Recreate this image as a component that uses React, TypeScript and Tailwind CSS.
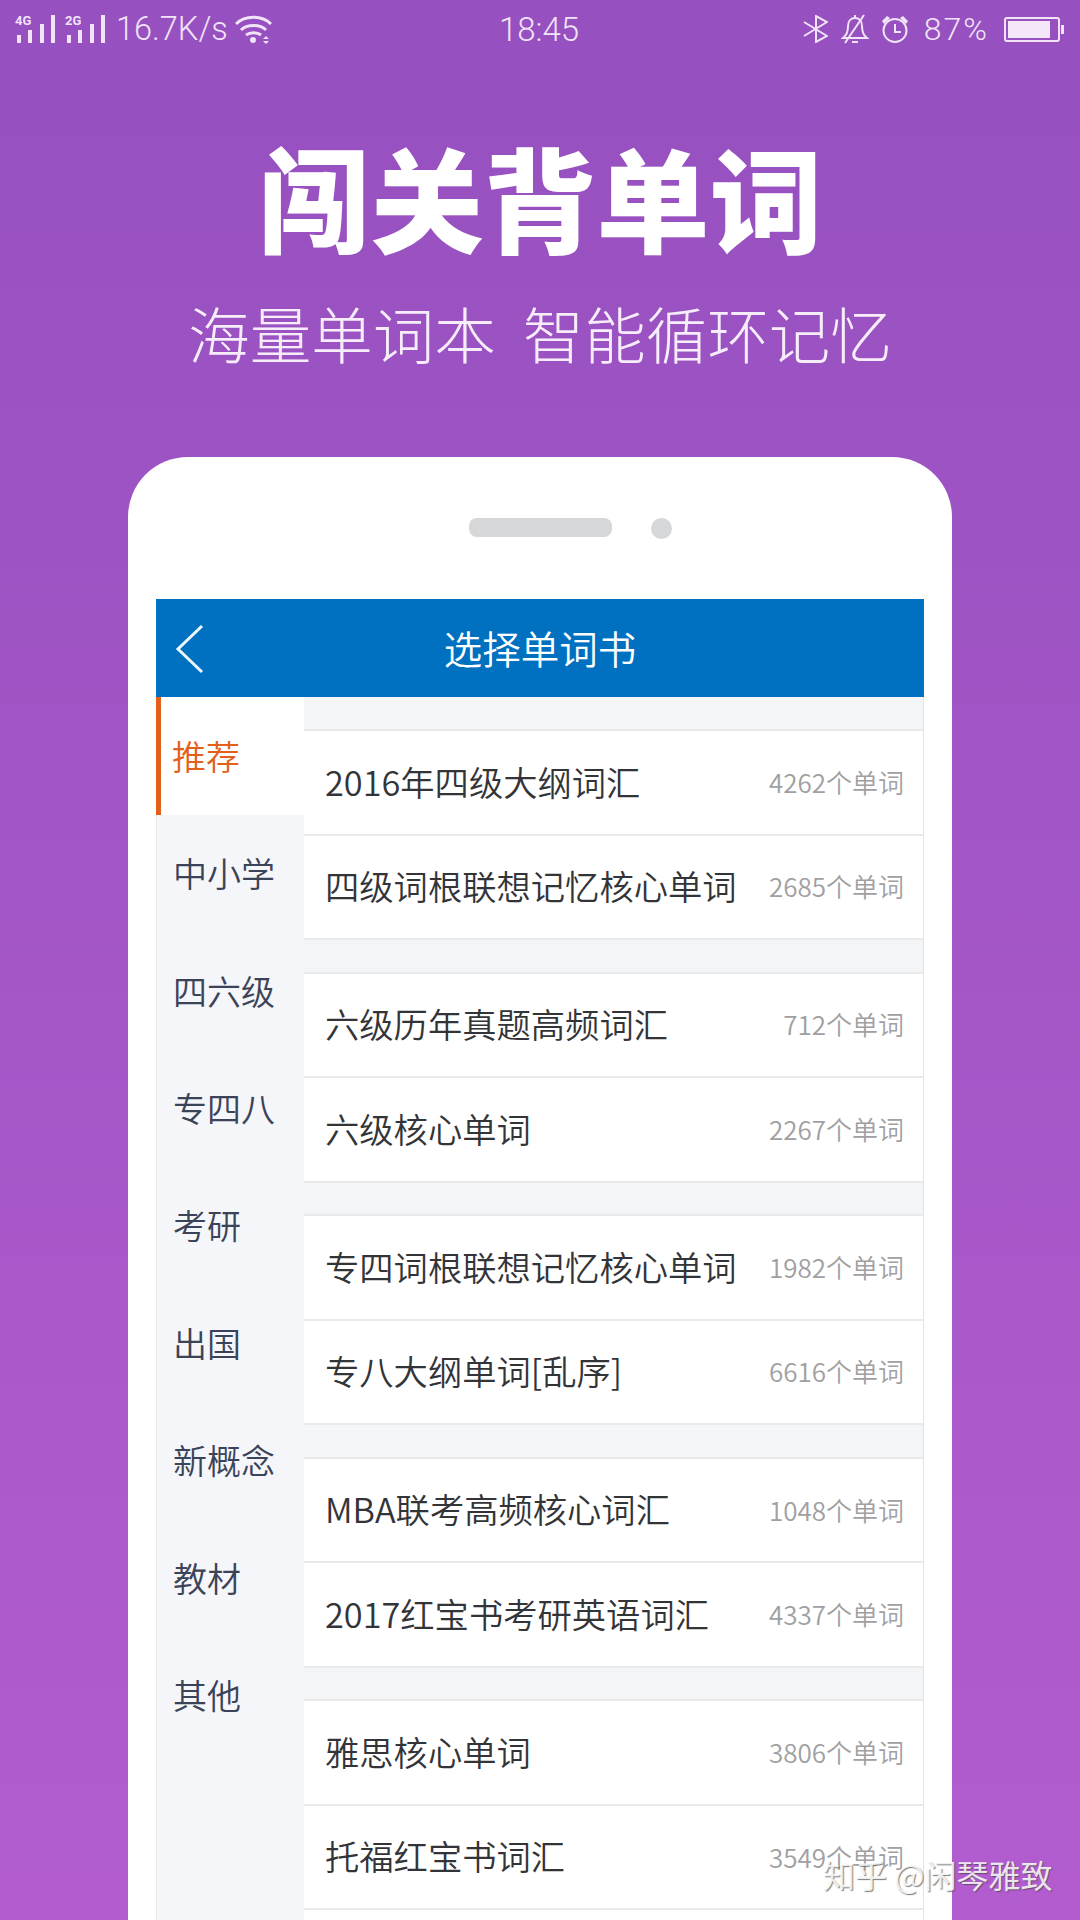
import React from 'react'

const CJK = "font-['Noto_Sans_CJK_SC','Liberation_Sans',sans-serif]"

const tabs = ['推荐', '中小学', '四六级', '专四八', '考研', '出国', '新概念', '教材', '其他']

const groups = [
  [['2016年四级大纲词汇', '4262个单词'], ['四级词根联想记忆核心单词', '2685个单词']],
  [['六级历年真题高频词汇', '712个单词'], ['六级核心单词', '2267个单词']],
  [['专四词根联想记忆核心单词', '1982个单词'], ['专八大纲单词[乱序]', '6616个单词']],
  [['MBA联考高频核心词汇', '1048个单词'], ['2017红宝书考研英语词汇', '4337个单词']],
  [['雅思核心单词', '3806个单词'], ['托福红宝书词汇', '3549个单词'], ['', '']],
]

function Signal({ label }: { label: string }) {
  const bars = [8, 13, 19, 28]
  return (
    <div className="relative w-[38px] h-[28px]">
      <span className="absolute -left-[2px] top-0 text-[13px] leading-[11px] font-bold font-['Roboto',sans-serif]">{label}</span>
      <div className="absolute inset-0 flex items-end justify-between">
        {bars.map((h, i) => (
          <div key={i} className="w-[4px] bg-[#f1e3f8]" style={{ height: h }} />
        ))}
      </div>
    </div>
  )
}

function StatusBar() {
  return (
    <div className="relative shrink-0 flex items-center h-[58px] pl-[17px] pr-[16px] text-[#f1e3f8] font-['Roboto',sans-serif]">
      <Signal label="4G" />
      <div className="w-[12px]" />
      <Signal label="2G" />
      <span className="ml-[11px] text-[32.500px] leading-none font-light">16.7K/s</span>
      <svg className="ml-[7px]" width="37" height="29" viewBox="0 0 37 29" fill="none" stroke="#f1e3f8" strokeWidth="3">
        <path d="M1 9 C10 0 27 0 36 9" />
        <path d="M6 15 C12 9 25 9 31 15" />
        <path d="M11 20 C15 17 22 17 26 20" />
        <circle cx="18" cy="25" r="3" fill="#f1e3f8" stroke="none" />
        <path d="M31 21 l3 3 h-6 z M28 26 h6 l-3 3 z" fill="#f1e3f8" stroke="none" />
      </svg>
      <span className="absolute left-[499px] top-[13px] text-[33px] leading-[33px] font-light">18:45</span>
      <div className="flex-1" />
      <svg width="25" height="28" viewBox="0 0 25 28" fill="none" stroke="#f1e3f8" strokeWidth="2">
        <path d="M1 7 L24 21 L13 27 V1 L24 7 L1 21" />
      </svg>
      <svg className="ml-[13px]" width="28" height="30" viewBox="0 0 28 30" fill="none" stroke="#f1e3f8" strokeWidth="2">
        <path d="M2 24 C6 21 7 17 7 12 C7 7 10 4 14 4 C18 4 21 7 21 12 C21 17 22 21 26 24 Z" />
        <path d="M14 1 V4 M11 28 H17 M23 1 L4 29" />
      </svg>
      <svg className="ml-[12px]" width="28" height="28" viewBox="0 0 28 28" fill="none" stroke="#f1e3f8" strokeWidth="2">
        <circle cx="14" cy="15.500" r="11.500" />
        <path d="M14 9 V17 H20" />
        <path d="M1 6 L6 1 L9 3 L3 9 Z M27 6 L22 1 L19 3 L25 9 Z" fill="#f1e3f8" stroke="none" />
      </svg>
      <span className="ml-[15px] text-[32px] leading-none font-light tracking-[2px]">87%</span>
      <div className="ml-[15px] flex items-center">
        <div className="w-[56px] h-[25px] border-2 border-[#f1e3f8] rounded-[3px] p-[2px]">
          <div className="h-full w-[87%] bg-[#f3e7f9]" />
        </div>
        <div className="ml-px w-[3px] h-[9px] bg-[#f1e3f8]" />
      </div>
    </div>
  )
}

function Sidebar() {
  return (
    <div className="w-[148px] bg-[#f5f6f9] border-l border-[#e6e7ea]">
      {tabs.map((t, i) => (
        <div
          key={t}
          className={`flex items-center text-[34px] font-[350] pb-[2px] ${
            i === 0
              ? 'h-[118px] bg-white text-[#e2601a] border-l-[5px] border-[#e2601a] pl-[11px] -ml-px'
              : 'h-[117.400px] text-[#3b4358] pl-[16px]'
          }`}
        >
          {t}
        </div>
      ))}
    </div>
  )
}

function BookRow({ title, count }: { title: string; count: string }) {
  return (
    <div className="h-[104.500px] bg-white border-b-2 border-[#e9eaec] flex items-center justify-between pl-[21px] pr-[19px] pb-[2px]">
      <span className="text-[34.300px] font-[350] text-[#333438]">{title}</span>
      <span className="text-[26px] font-[350] text-[#a0a0a2]">{count}</span>
    </div>
  )
}

export default function App() {
  return (
    <div className={`h-[1920px] w-[1080px] overflow-hidden relative flex flex-col bg-gradient-to-b from-[#9650bf] to-[#b25ccf] ${CJK}`}>
      <StatusBar />

      <div className="mt-[75px] h-[124px] shrink-0 flex items-center justify-center text-white text-[113px] leading-none font-black">
        闯关背单词
      </div>
      <div className="mt-[34px] h-[84px] shrink-0 flex items-center justify-center text-[#f6ecfa] text-[61.500px] font-extralight leading-none whitespace-pre">
        海量单词本  智能循环记忆
      </div>

      <div className="mt-[82px] mx-[128px] flex-1 min-h-0 bg-white rounded-t-[60px] px-[28px] flex flex-col">
        <div className="h-[142px] shrink-0 flex items-center justify-center relative">
          <div className="w-[143px] h-[19px] rounded-[8px] bg-[#d6d7d9] -mt-[1px]" />
          <div className="absolute left-[495px] w-[21px] h-[21px] rounded-full bg-[#d6d7d9]" />
        </div>

        <div className="h-[98px] shrink-0 bg-[#0070c0] flex items-center justify-center relative text-white text-[38.500px] font-[350]">
          <svg className="absolute left-[19px] top-[25px]" width="30" height="50" viewBox="0 0 30 50" fill="none" stroke="#eef8ff" strokeWidth="3">
            <path d="M27 2 L3 25 L27 48" />
          </svg>
          选择单词书
        </div>

        <div className="flex-1 min-h-0 flex overflow-hidden">
          <Sidebar />
          <div className="flex-1 bg-[#f4f5f7] border-r border-[#e2e3e6] pt-[32px]">
            {groups.map((g, i) => (
              <div key={i} className="mb-[31.600px]">
                <div className="border-t-2 border-[#e9eaec]" />
                {g.map(([title, count], j) => (
                  <BookRow key={j} title={title} count={count} />
                ))}
              </div>
            ))}
          </div>
        </div>
      </div>

      <div className="absolute left-[823px] top-[1854px] text-[32px] leading-[40px] text-white/85 [text-shadow:1px_1px_1px_rgba(70,70,70,0.7)] whitespace-nowrap">
        知乎 @闲琴雅致
      </div>
    </div>
  )
}
